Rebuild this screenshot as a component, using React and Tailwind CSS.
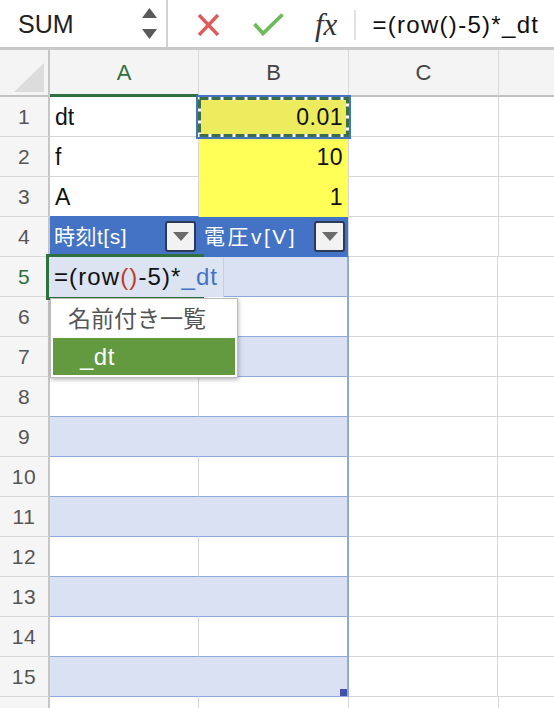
import React from 'react';

const FONT = "font-['Liberation_Sans','Noto_Sans_CJK_JP',sans-serif]";

const Arrows = () => (
    <svg width="15" height="32" viewBox="0 0 15 32">
        <polygon points="7.5,0 15,10 0,10" fill="#5a5a5a" />
        <polygon points="0,21 15,21 7.5,31" fill="#5a5a5a" />
    </svg>
);

const Filter = () => (
    <div className="w-[31px] h-[31px] rounded-[3px] border-2 border-[#2c3a57] bg-[#f2f2f2] flex items-center justify-center">
        <svg width="16" height="10" viewBox="0 0 16 10">
            <polygon points="0,0 16,0 8,9" fill="#6b6b6b" />
        </svg>
    </div>
);

const RowHead = ({ n, active }) => (
    <div className={`w-[50px] shrink-0 h-full bg-[#f5f5f5] border-r-2 border-r-[#c6c6c6] border-b border-b-[#d8d8d8] flex items-center justify-center text-[21px] tracking-[0.5px] ${active ? 'text-[#2f6f40]' : 'text-[#555]'}`}>
        {n}
    </div>
);

const Plain = ({ w, children, className = '' }) => (
    <div className={`${w} shrink-0 h-full border-r border-b border-[#d6d6d6] ${className}`}>{children}</div>
);

const App = () => {
    const bandRows = [5, 6, 7, 8, 9, 10, 11, 12, 13, 14, 15];

    return (
        <div className={`relative w-[554px] h-[708px] overflow-hidden bg-white text-[#111] ${FONT}`}>
            {/* toolbar */}
            <div className="h-[50px] flex items-stretch border-b-[3px] border-[#c9c9c9] pt-[2px]">
                <div className="w-[168px] shrink-0 border-r-2 border-[#d2d2d2] flex items-center justify-between pl-[18px] pr-[9px] -mt-[2px]">
                    <span className="text-[25px] text-[#222] mt-[3px]">SUM</span>
                    <Arrows />
                </div>
                <div className="flex items-center">
                    <svg className="ml-[29px]" width="23" height="22" viewBox="0 0 23 22">
                        <path d="M2 1 L21 21 M21 1 L2 21" stroke="#db5c5a" strokeWidth="3.4" />
                    </svg>
                    <svg className="ml-[33px]" width="31" height="23" viewBox="0 0 31 23">
                        <path d="M1.5 11 L10 20.5 L29.5 1.5" fill="none" stroke="#6dbb5c" strokeWidth="3.8" />
                    </svg>
                    <span className="ml-[31px] font-['Liberation_Serif',serif] italic text-[31px] text-[#333] leading-none">fx</span>
                    <div className="ml-[17px] w-[2px] h-[30px] bg-[#e0e0e0]" />
                    <span className="ml-[16px] text-[24px] tracking-[1.3px] text-[#111]">=(row()-5)*_dt</span>
                </div>
            </div>

            {/* column headers */}
            <div className="h-[47px] flex bg-[#f4f4f4] text-[22px] text-[#444]">
                <div className="w-[50px] shrink-0 border-r-2 border-r-[#c6c6c6] border-b-2 border-b-[#c2c2c2] relative">
                    <svg className="absolute left-[14px] top-[13px]" width="31" height="30" viewBox="0 0 31 30">
                        <polygon points="0,29 30,29 30,0" fill="#dcdcdc" />
                    </svg>
                </div>
                <div className="w-[149px] shrink-0 border-r border-r-[#d9d9d9] border-b-[3px] border-b-[#2f6f40] flex items-center justify-center text-[#2f6f40]">A</div>
                <div className="w-[150px] shrink-0 border-r border-r-[#d9d9d9] border-b-2 border-b-[#c2c2c2] flex items-center justify-center">B</div>
                <div className="w-[150px] shrink-0 border-r border-r-[#d9d9d9] border-b-2 border-b-[#c2c2c2] flex items-center justify-center">C</div>
                <div className="flex-1 border-b-2 border-b-[#c2c2c2]" />
            </div>

            {/* rows 1-3 */}
            {[['dt', '0.01'], ['f', '10'], ['A', '1']].map(([a, b], i) => (
                <div key={a} className="h-[40px] flex text-[23px]">
                    <RowHead n={i + 1} />
                    <Plain w="w-[149px]" className={`flex items-center pl-[5px] pt-[2px] ${i === 2 ? 'border-b-[#4472c4]' : ''}`}>{a}</Plain>
                    <div className={`w-[150px] shrink-0 h-full border-r border-r-[#d6d6d6] border-b flex items-center justify-end pr-[5px] pt-[2px] tracking-[0.5px] ${i === 0 ? 'bg-[#ecec5e] border-b-[#ecec5e]' : 'bg-[#ffff57] border-b-[#ffff57]'} ${i === 2 ? 'border-b-[#4472c4]' : ''}`}>{b}</div>
                    <Plain w="w-[150px]" />
                    <div className="flex-1 border-b border-[#d6d6d6]" />
                </div>
            ))}

            {/* row 4 table header */}
            <div className="h-[40px] flex text-[21px] tracking-[0.5px]">
                <RowHead n={4} />
                <div className="w-[149px] shrink-0 h-full bg-[#4472c4] border-b border-[#4472c4] flex items-center justify-between pl-[4px] pr-[3px] text-white">
                    <span>時刻t[s]</span>
                    <Filter />
                </div>
                <div className="w-[150px] shrink-0 h-full bg-[#4472c4] border-r border-r-[#d6d6d6] border-b border-b-[#4472c4] flex items-center justify-between pl-[5px] pr-[3px] text-white">
                    <span className="tracking-[2.5px]">電圧v[V]</span>
                    <Filter />
                </div>
                <Plain w="w-[150px]" />
                <div className="flex-1 border-b border-[#d6d6d6]" />
            </div>

            {/* rows 5-15 */}
            {bandRows.map((n) => {
                const band = n % 2 === 1;
                return (
                    <div key={n} className="h-[40px] flex">
                        <RowHead n={n} active={n === 5} />
                        <div className={`w-[149px] shrink-0 h-full border-b border-b-[#8eaadb] border-r ${band ? 'bg-[#d9e1f2] border-r-[#d9e1f2]' : 'border-r-[#d6d6d6]'}`} />
                        <div className={`w-[150px] shrink-0 h-full border-b border-b-[#8eaadb] border-r-2 border-r-[#8eaadb] relative ${band ? 'bg-[#d9e1f2]' : ''}`}>
                            {n === 15 && <div className="absolute right-0 bottom-0 w-[7px] h-[7px] bg-[#3f52a8]" />}
                        </div>
                        <Plain w="w-[149px]" />
                        <div className="flex-1 border-b border-[#d6d6d6]" />
                    </div>
                );
            })}
            <div className="h-[12px] flex">
                <div className="w-[50px] shrink-0 bg-[#f5f5f5] border-r-2 border-r-[#c6c6c6]" />
                <div className="w-[149px] shrink-0 border-r border-[#d6d6d6]" />
                <div className="w-[150px] shrink-0 border-r border-[#d6d6d6]" />
                <div className="w-[150px] shrink-0 border-r border-[#d6d6d6]" />
            </div>

            {/* B1 copy marquee */}
            <svg className="absolute left-[196px] top-[95px]" width="155" height="44" viewBox="0 0 155 44">
                <rect x="1" y="1" width="153" height="42" fill="none" stroke="#4472c4" strokeWidth="2" />
                <rect x="3.5" y="3.5" width="148" height="37" fill="none" stroke="#ffffff" strokeWidth="3" />
                <rect x="3.5" y="3.5" width="148" height="37" fill="none" stroke="#3b6e45" strokeWidth="3" strokeDasharray="9 3" />
            </svg>

            {/* editing cell */}
            <div className="absolute left-[46px] top-[254px] w-[158px] h-[46px] border-[3px] border-[#2f6f40]" />
            <div className="absolute left-[49px] top-[257px] w-[175px] h-[40px] bg-[#dce3f1] border-r border-[#c9cfdd] flex items-center pl-[5px] text-[24px] tracking-[1.1px] text-[#111] whitespace-nowrap">
                <span>=(row</span>
                <span className="text-[#c0392b]">()</span>
                <span>-5)*</span>
                <span className="text-[#4472c4]">_dt</span>
            </div>

            {/* autocomplete */}
            <div className="absolute left-[50px] top-[298px] w-[188px] h-[80px] bg-white border border-[#bdbdbd] shadow-[1px_2px_4px_rgba(0,0,0,0.25)] p-[2px] flex flex-col">
                <div className="h-[37px] flex items-center pl-[15px] text-[23px] text-[#555]">名前付き一覧</div>
                <div className="flex-1 bg-[#63993f] flex items-center pl-[27px] text-[24px] tracking-[0.5px] text-white">_dt</div>
            </div>
        </div>
    );
};

export default App;
